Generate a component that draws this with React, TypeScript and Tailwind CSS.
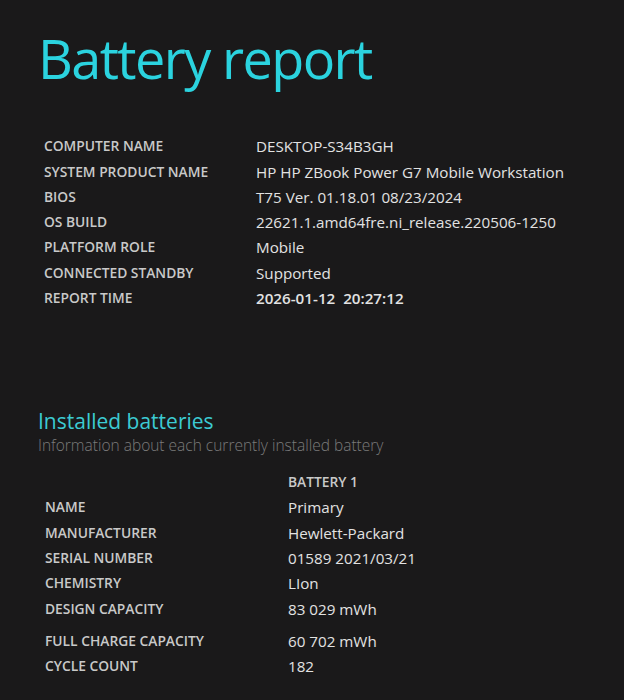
const systemRows: [string, string][] = [
  ["COMPUTER NAME", "DESKTOP-S34B3GH"],
  ["SYSTEM PRODUCT NAME", "HP HP ZBook Power G7 Mobile Workstation"],
  ["BIOS", "T75 Ver. 01.18.01 08/23/2024"],
  ["OS BUILD", "22621.1.amd64fre.ni_release.220506-1250"],
  ["PLATFORM ROLE", "Mobile"],
  ["CONNECTED STANDBY", "Supported"],
];

const batteryRows: [string, string][] = [
  ["NAME", "Primary"],
  ["MANUFACTURER", "Hewlett-Packard"],
  ["SERIAL NUMBER", "01589 2021/03/21"],
  ["CHEMISTRY", "LIon"],
  ["DESIGN CAPACITY", "83 029 mWh"],
];

const capacityRows: [string, string][] = [
  ["FULL CHARGE CAPACITY", "60 702 mWh"],
  ["CYCLE COUNT", "182"],
];

function Row({ label, value, bold, valueCol }: { label: string; value: string; bold?: boolean; valueCol: string }) {
  return (
    <div className="flex h-[25.3px] items-center">
      <div className={`${valueCol} shrink-0 text-[13.8px] font-semibold text-[#c9c9c9]`}>{label}</div>
      <div className={`whitespace-pre text-[15.2px] text-[#e2e2e2] ${bold ? "font-semibold" : "font-normal"}`}>
        {value}
      </div>
    </div>
  );
}

export default function App() {
  return (
    <div
      className="h-[700px] w-[624px] overflow-hidden bg-[#1a191a] pl-[38px]"
      style={{ fontFamily: '"Open Sans", "Noto Sans", sans-serif' }}
    >
      <h1 className="pt-[23px] text-[54px] leading-[70px] font-normal tracking-[-1.6px] text-[#2bd3df]">
        Battery report
      </h1>

      <section className="mt-[41px] pl-[6px]">
        {systemRows.map(([l, v]) => (
          <Row key={l} label={l} value={v} valueCol="w-[212px]" />
        ))}
        <Row label="REPORT TIME" value="2026-01-12  20:27:12" bold valueCol="w-[212px]" />
      </section>

      <section className="mt-[97px]">
        <h2 className="text-[21px] leading-[26px] font-normal text-[#3ccbd3]">Installed batteries</h2>
        <p className="text-[15.5px] leading-[22px] font-light text-[#7b7b7b]">
          Information about each currently installed battery
        </p>

        <div className="mt-[14px] pl-[7px]">
          <div className="flex h-[25px] items-center">
            <div className="w-[243px]" />
            <div className="text-[13.8px] font-semibold text-[#c9c9c9]">BATTERY 1</div>
          </div>
          {batteryRows.map(([l, v]) => (
            <Row key={l} label={l} value={v} valueCol="w-[243px]" />
          ))}
          <div className="h-[7px]" />
          {capacityRows.map(([l, v]) => (
            <Row key={l} label={l} value={v} valueCol="w-[243px]" />
          ))}
        </div>
      </section>
    </div>
  );
}
